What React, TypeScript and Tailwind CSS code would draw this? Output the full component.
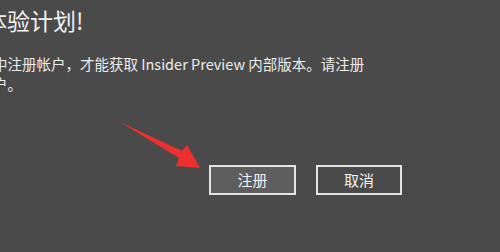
export default function App() {
  return (
    <div
      className="relative h-[252px] w-[500px] overflow-hidden bg-[#4a4a4a] text-[#f2f2f2]"
      style={{ fontFamily: '"Noto Sans CJK SC", "Noto Sans", sans-serif' }}
    >
      <div className="flex flex-col pt-[9px]">
        <h1 className="ml-[-16px] whitespace-nowrap text-[23px] font-normal leading-[23px]">
          体验计划!
        </h1>
        <p className="ml-[-7px] mt-[22px] whitespace-nowrap text-[14.5px] leading-[20px] text-[#ececec]">
          中注册帐户，才能获取 Insider Preview 内部版本。请注册
          <br />
          户。
        </p>
        <div className="mt-[71px] flex justify-end gap-[20px] pr-[98px]">
          <button className="h-[30px] w-[87px] border-2 border-[#e4e4e4] bg-[#5e5e5e] pb-[2px] text-[15px] leading-none text-[#f2f2f2]">
            注册
          </button>
          <button className="h-[30px] w-[86px] border-2 border-[#e4e4e4] bg-[#4a4a4a] pb-[2px] text-[15px] leading-none text-[#f2f2f2]">
            取消
          </button>
        </div>
      </div>

      {/* red annotation arrow */}
      <svg className="pointer-events-none absolute left-0 top-0" width="500" height="252" viewBox="0 0 500 252">
        <polygon
          points="120,122 182,151 187,145 200,168 176,166 179,158"
          fill="#ef2f2f"
        />
      </svg>
    </div>
  )
}
